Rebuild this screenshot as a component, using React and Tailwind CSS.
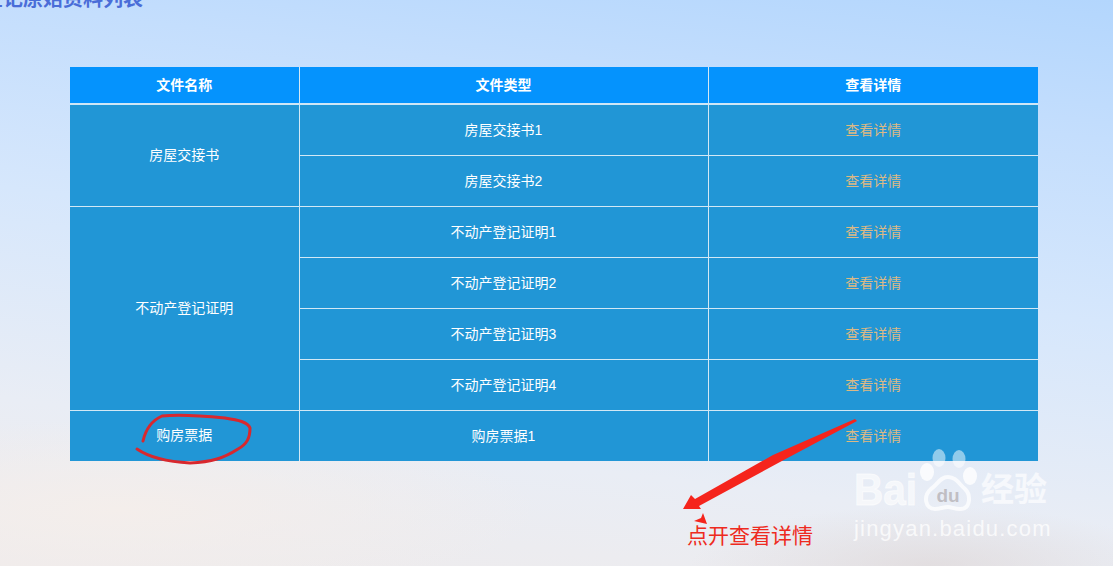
const cjk = 'font-["Liberation_Sans","Noto_Sans_CJK_SC",sans-serif]'

const groups = [
  { name: '房屋交接书', files: ['房屋交接书1', '房屋交接书2'] },
  {
    name: '不动产登记证明',
    files: ['不动产登记证明1', '不动产登记证明2', '不动产登记证明3', '不动产登记证明4'],
  },
  { name: '购房票据', files: ['购房票据1'] },
]

const cell = 'border border-[#d3e8f5] text-center align-middle'
const bodyCell = `${cell} pt-[2px]`
const headCell = `${cell} border-b-2 border-b-[#cfe6f6]`

function Annotations() {
  return (
    <svg className="absolute left-0 top-0 pointer-events-none" width="1113" height="566" fill="none">
      {/* circle round the third group */}
      <path
        d="M143 441 C146 428 153 420 162 416 C180 414 205 416 225 418 C238 420 248 422 250 428 C250 438 247 444 238 449 C224 458 212 462 190 463 C172 462 150 458 137 449"
        stroke="#d8282e"
        strokeWidth="3"
        strokeLinecap="round"
        strokeLinejoin="round"
      />
      {/* arrow to the caption */}
      <path d="M855 419 L773 455 L695 499 L691 495 L683 509 L701 509 L699 506 L780 462 L857 421 Z" fill="#f5241c" />
      <path d="M694 521 L707 524 L703 513 L701 518 Z" fill="#f5241c" />
    </svg>
  )
}

function Watermark() {
  return (
    <div className={`absolute left-[854px] top-[447px] flex w-[200px] flex-col text-white/70 ${cjk}`}>
      <div className="flex h-[64px] items-end">
        <span className="mb-[-4px] w-[64px] origin-left scale-x-90 text-[45px] leading-[50px] font-bold text-white/60 [-webkit-text-stroke:1px_#ffffff99]">
          Bai
        </span>
        <svg width="62" height="64" viewBox="0 0 62 64" fill="none" className="shrink-0">
          <ellipse cx="21" cy="11" rx="6.5" ry="9" fill="#ffffff" fillOpacity="0.5" />
          <ellipse cx="41" cy="12" rx="6.5" ry="9" fill="#ffffff" fillOpacity="0.5" />
          <ellipse cx="9" cy="25" rx="7" ry="9" fill="#ffffff" fillOpacity="0.8" />
          <ellipse cx="52" cy="29" rx="7" ry="9" fill="#ffffff" fillOpacity="0.8" />
          <path
            d="M30 30 C38 30 41 37 47 42 C53 48 53 62 42 62 C36 62 34 60 30 60 C25 60 22 62 17 62 C7 62 5 49 13 42 C20 37 22 30 30 30 Z"
            stroke="#ffffff"
            strokeOpacity="0.75"
            strokeWidth="4"
          />
          <text x="30" y="55" textAnchor="middle" fontSize="19" fontWeight="700" fill="#b9b6ba" fillOpacity="0.85" fontFamily="Liberation Sans">
            du
          </text>
        </svg>
        <span className="mb-[-1px] ml-[1px] text-[33px] leading-[44px] font-bold text-white/65 whitespace-nowrap">
          经验
        </span>
      </div>
      <span className="mt-[5px] text-[22px] leading-[26px] tracking-[1.2px] text-white/75 whitespace-nowrap">
        jingyan.baidu.com
      </span>
    </div>
  )
}

export default function App() {
  return (
    <div
      className={`relative h-[566px] w-[1113px] overflow-hidden bg-[radial-gradient(ellipse_240px_60px_at_930px_566px,#dcd4d499,transparent),radial-gradient(ellipse_420px_90px_at_120px_510px,#f4eeeb,transparent),linear-gradient(187deg,#b3d6fd_0%,#c4defd_20%,#d6e7fc_46%,#e9edf5_76%,#efebeb_100%)] ${cjk}`}
    >
      <h1 className="-mt-[14px] -ml-[17px] h-[81px] text-[20px] leading-[26px] font-bold text-[#4a6dd8]">
        登记原始资料列表
      </h1>

      <table className="ml-[70px] w-[968px] table-fixed border-collapse border-hidden text-[14px] text-white">
        <colgroup>
          <col className="w-[229px]" />
          <col className="w-[409px]" />
          <col className="w-[330px]" />
        </colgroup>
        <thead>
          <tr className="h-[37px] bg-[#0593fd] text-[14px] font-bold">
            <th className={headCell}>文件名称</th>
            <th className={headCell}>文件类型</th>
            <th className={headCell}>查看详情</th>
          </tr>
        </thead>
        <tbody className="bg-[#2196d6]">
          {groups.map((group) =>
            group.files.map((file, i) => (
              <tr key={file} className="h-[51px]">
                {i === 0 && (
                  <td rowSpan={group.files.length} className={cell}>
                    {group.name}
                  </td>
                )}
                <td className={bodyCell}>{file}</td>
                <td className={`${bodyCell} text-[#dcb985]`}>查看详情</td>
              </tr>
            ))
          )}
        </tbody>
      </table>

      <Watermark />
      <Annotations />

      <div className="absolute left-[687px] top-[522px] text-[21px] leading-[28px] text-[#ee2a20] whitespace-nowrap">
        点开查看详情
      </div>
    </div>
  )
}
